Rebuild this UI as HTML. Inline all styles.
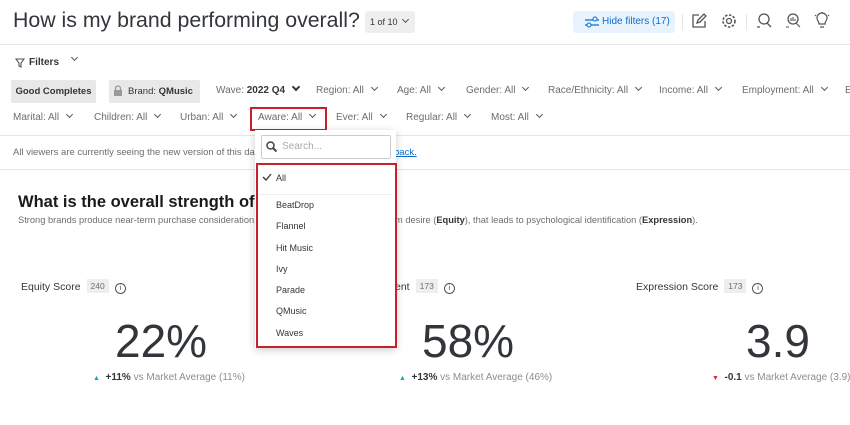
<html><head><style>
body{margin:0;width:850px;height:425px;overflow:hidden;background:#fff;font-family:"Liberation Sans",sans-serif;color:#32363a;position:relative}
.a{position:absolute;white-space:nowrap}
.f{font-size:10px;color:#6a6d70}
.chev{display:inline-block;width:4px;height:4px;border-right:1.4px solid #555;border-bottom:1.4px solid #555;transform:rotate(45deg);margin-left:8px;position:relative;top:-3px}
.hr{position:absolute;left:0;width:850px;height:1px;background:#e5e5e5}
.big{font-size:46px;font-weight:300;color:#32363a}
.d{font-size:10px;color:#8a8e92}
.d b{color:#32363a}
.badge{display:inline-block;background:#eee;color:#6a6d70;font-size:8.5px;padding:2px 4px;margin-left:6px;vertical-align:1px}
.info{display:inline-block;width:9px;height:9px;border:1.2px solid #555;border-radius:50%;margin-left:6px;vertical-align:0px;font-size:7px;text-align:center;line-height:9px}
.it{position:absolute;left:276px;font-size:9px;color:#32363a}
</style></head><body>
<div class="a" style="left:13px;top:8px;font-size:21.3px;color:#32363a">How is my brand performing overall?</div>
<div class="a" style="left:365px;top:11px;width:50px;height:22px;background:#eee;border-radius:3px;font-size:9px;line-height:22px;text-indent:5px">1 of 10<span class="chev" style="margin-left:5px"></span></div>
<div class="a" style="left:573px;top:11px;width:102px;height:22px;background:#e9f3fd;border-radius:3px;color:#0b6ed0;font-size:10px;line-height:22px;text-indent:29px">Hide filters (17)</div>
<svg class="a" style="left:584px;top:15px" width="16" height="14"><path d="M1 5h14M1 10h14" stroke="#0b6ed0" stroke-width="1.3"/><circle cx="11" cy="4" r="2" fill="#e9f3fd" stroke="#0b6ed0"/><circle cx="5" cy="10" r="2" fill="#e9f3fd" stroke="#0b6ed0"/></svg>
<div class="a" style="left:682px;top:14px;width:1px;height:16px;background:#e5e5e5"></div>
<svg class="a" style="left:691px;top:13px" width="16" height="16"><path d="M8 2H2v12h12V8M6 10l1-3 6-6 2 2-6 6z" fill="none" stroke="#555" stroke-width="1.3"/></svg>
<svg class="a" style="left:721px;top:13px" width="16" height="16"><circle cx="8" cy="8" r="2.5" fill="none" stroke="#555" stroke-width="1.3"/><circle cx="8" cy="8" r="6" fill="none" stroke="#555" stroke-width="1.6" stroke-dasharray="2.5 1.5"/></svg>
<div class="a" style="left:746px;top:14px;width:1px;height:16px;background:#e5e5e5"></div>
<svg class="a" style="left:755px;top:12px" width="18" height="18"><circle cx="9" cy="7" r="5" fill="none" stroke="#555" stroke-width="1.3"/><path d="M12 11l4 4M2 15h3" stroke="#555" stroke-width="1.3"/></svg>
<svg class="a" style="left:784px;top:12px" width="18" height="18"><circle cx="9" cy="7" r="5" fill="none" stroke="#555" stroke-width="1.3"/><path d="M12 11l4 4M2 15h3M7 9V6M9 9V5M11 9V7" stroke="#555" stroke-width="1.1"/></svg>
<svg class="a" style="left:814px;top:12px" width="16" height="18"><path d="M5 12c0-3-2-3-2-6a5 5 0 0 1 10 0c0 3-2 3-2 6zM6 15h4M8 0v1M1 3l1 1M15 3l-1 1" fill="none" stroke="#555" stroke-width="1.2"/></svg>
<div class="hr" style="top:44px"></div>
<svg class="a" style="left:15px;top:58px" width="10" height="10"><path d="M1 1h8L6 5v4L4 8V5z" fill="none" stroke="#555" stroke-width="1.1"/></svg>
<div class="a" style="left:29px;top:57px;font-size:10px;font-weight:bold">Filters</div>
<div class="a" style="left:64px;top:58px"><span class="chev"></span></div>
<div class="a" style="left:11px;top:80px;width:85px;height:23px;background:#e8e8e8;border-radius:2px;font-size:9.5px;font-weight:bold;line-height:23px;text-align:center">Good Completes</div>
<div class="a" style="left:109px;top:80px;width:91px;height:23px;background:#e8e8e8;border-radius:2px;font-size:9.5px;line-height:23px;text-indent:19px">Brand: <b>QMusic</b></div>
<svg class="a" style="left:113px;top:85px" width="10" height="12"><path d="M2.5 5V3.5a2.5 2.5 0 0 1 5 0V5" fill="none" stroke="#999" stroke-width="1.3"/><rect x="1" y="5" width="8" height="6" fill="#999"/></svg>
<div class="a f" style="left:216px;top:85px">Wave: <span style="color:#32363a;font-weight:bold">2022 Q4</span><span class="chev" style="border-color:#32363a;border-width:2px"></span></div>
<div class="a f" style="left:316px;top:85px">Region: All<span class="chev"></span></div>
<div class="a f" style="left:397px;top:85px">Age: All<span class="chev"></span></div>
<div class="a f" style="left:466px;top:85px">Gender: All<span class="chev"></span></div>
<div class="a f" style="left:548px;top:85px">Race/Ethnicity: All<span class="chev"></span></div>
<div class="a f" style="left:659px;top:85px">Income: All<span class="chev"></span></div>
<div class="a f" style="left:742px;top:85px">Employment: All<span class="chev"></span></div>
<div class="a f" style="left:845px;top:85px">E</div>
<div class="a f" style="left:13px;top:112px">Marital: All<span class="chev"></span></div>
<div class="a f" style="left:94px;top:112px">Children: All<span class="chev"></span></div>
<div class="a f" style="left:180px;top:112px">Urban: All<span class="chev"></span></div>
<div class="a" style="left:250px;top:107px;width:73px;height:20px;border:2px solid #c8202f"></div>
<div class="a f" style="left:258px;top:112px">Aware: All<span class="chev"></span></div>
<div class="a f" style="left:336px;top:112px">Ever: All<span class="chev"></span></div>
<div class="a f" style="left:406px;top:112px">Regular: All<span class="chev"></span></div>
<div class="a f" style="left:491px;top:112px">Most: All<span class="chev"></span></div>
<div class="hr" style="top:135px"></div>
<div class="a" style="left:13px;top:147px;font-size:9.5px;color:#6a6d70">All viewers are currently seeing the new version of this dash</div>
<div class="a" style="left:394px;top:147px;font-size:9.5px;color:#0b6ed0;text-decoration:underline">back.</div>
<div class="hr" style="top:169px"></div>
<div class="a" style="left:18px;top:193px;font-size:16.5px;font-weight:bold;color:#1a1a1a">What is the overall strength of m</div>
<div class="a" style="left:18px;top:215px;font-size:9.3px;color:#6a6d70">Strong brands produce near-term purchase consideration</div>
<div class="a" style="left:395px;top:215px;font-size:9.3px;color:#6a6d70">m desire (<b style="color:#32363a">Equity</b>), that leads to psychological identification (<b style="color:#32363a">Expression</b>).</div>
<div class="a" style="left:21px;top:279px;font-size:10.5px">Equity Score<span class="badge">240</span><span class="info">i</span></div>
<div class="a" style="left:395px;top:279px;font-size:10.5px">ent<span class="badge">173</span><span class="info">i</span></div>
<div class="a" style="left:636px;top:279px;font-size:10.5px">Expression Score<span class="badge">173</span><span class="info">i</span></div>
<div class="a big" style="left:115px;top:314px">22%</div>
<div class="a big" style="left:422px;top:314px">58%</div>
<div class="a big" style="left:746px;top:314px">3.9</div>
<div class="a d" style="left:93px;top:372px"><span style="color:#1aa4b8;font-size:7px">▲</span> &nbsp;<b>+11%</b> vs Market Average (11%)</div>
<div class="a d" style="left:399px;top:372px"><span style="color:#1aa4b8;font-size:7px">▲</span> &nbsp;<b>+13%</b> vs Market Average (46%)</div>
<div class="a d" style="left:712px;top:372px"><span style="color:#e0263a;font-size:7px">▼</span> &nbsp;<b>-0.1</b> vs Market Average (3.9)</div>
<div class="a" style="left:255px;top:130px;width:141px;height:218px;background:#fff;box-shadow:0 2px 8px rgba(0,0,0,.2)"></div>
<div class="a" style="left:261px;top:135px;width:128px;height:22px;border:1px solid #ccc;border-radius:2px"></div>
<svg class="a" style="left:266px;top:141px" width="11" height="11"><circle cx="4.5" cy="4.5" r="3.5" fill="none" stroke="#444" stroke-width="1.5"/><path d="M7 7l3.5 3.5" stroke="#444" stroke-width="2"/></svg>
<div class="a" style="left:282px;top:141px;font-size:10px;color:#aaa">Search...</div>
<div class="a" style="left:256px;top:163px;width:137px;height:181px;border:2px solid #c8202f"></div>
<div class="a" style="left:258px;top:194px;width:135px;height:1px;background:#eee"></div>
<svg class="a" style="left:262px;top:173px" width="10" height="8"><path d="M1 4l3 3 5-6" fill="none" stroke="#32363a" stroke-width="1.3"/></svg>
<div class="it" style="top:173px">All</div>
<div class="it" style="top:200px">BeatDrop</div>
<div class="it" style="top:221px">Flannel</div>
<div class="it" style="top:243px">Hit Music</div>
<div class="it" style="top:264px">Ivy</div>
<div class="it" style="top:285px">Parade</div>
<div class="it" style="top:306px">QMusic</div>
<div class="it" style="top:328px">Waves</div>
</body></html>
